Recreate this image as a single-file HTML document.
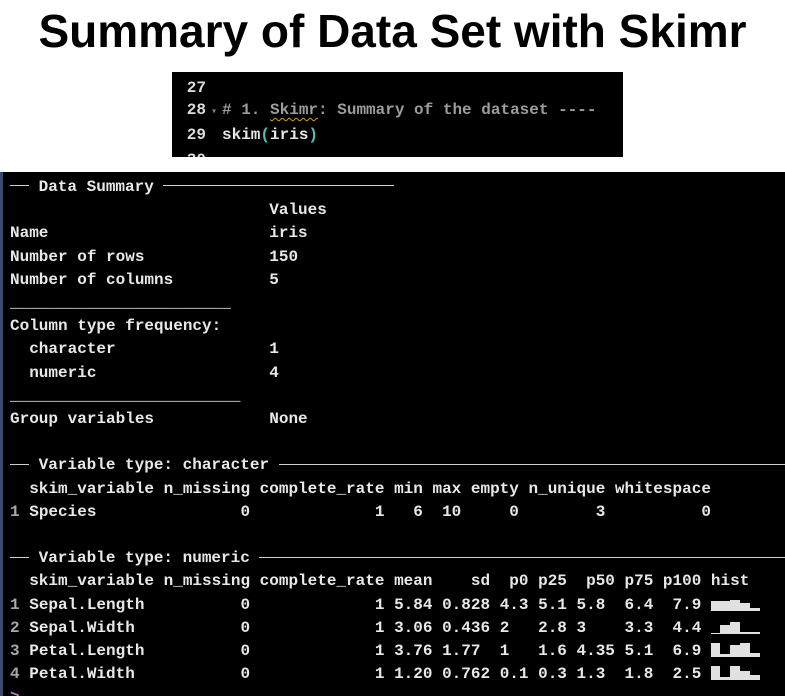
<!DOCTYPE html>
<html><head><meta charset="utf-8"><style>
html,body{margin:0;padding:0;background:#fff;width:785px;height:696px;overflow:hidden;position:relative}
.title{position:absolute;left:0;top:8px;width:785px;text-align:center;font:bold 46px/46px "Liberation Sans",Arial,sans-serif;color:#000;white-space:nowrap}
.code{position:absolute;left:172px;top:72px;width:451px;height:85px;background:#000;overflow:hidden}
.code pre{margin:0;position:absolute;left:0;top:5px;font:bold 16px/22px "Liberation Mono","DejaVu Sans Mono",monospace;color:#e6e6e6}
.ln{display:inline-block;width:34px;text-align:right;color:#dcdcdc}
.fold{display:inline-block;width:16px;color:#888;font-size:10px;text-align:center}
.cm{color:#9c9c9c}
.sk{text-decoration:underline wavy #d4a017;text-underline-offset:3px;text-decoration-thickness:1px}
.pa{color:#4fc1a8}
.term{position:absolute;left:0;top:172px;width:785px;height:524px;background:#000;overflow:hidden}
.term:before{content:"";position:absolute;left:0;top:0;width:3px;height:524px;background:#3b4a66}
.term pre{margin:0;position:absolute;left:10px;top:4px;font:bold 16px/23.2px "Liberation Mono","DejaVu Sans Mono",monospace;color:#e8e8e8}
.g{color:#a8a8a8}
.rule{display:inline-block;height:1px;background:#cfcfcf;vertical-align:middle;position:relative;top:-1px}
.h{display:inline-block;vertical-align:-2px}
.pr{color:#c77ad9}
</style></head><body>
<div class="title">Summary of Data Set with Skimr</div>
<div class="code"><pre><span class="ln">27</span>
<span class="ln">28</span><span class="fold">▾</span><span class="cm"># 1. <span class="sk">Skimr</span>: Summary of the dataset ----</span>
<span class="ln">29</span><span class="fold"> </span>skim<span class="pa">(</span>iris<span class="pa">)</span>
<span class="ln">30</span></pre></div>
<div class="term"><pre><span class="rule" style="width:19px"></span> Data Summary <span class="rule" style="width:231px"></span>
                           Values
Name                       iris
Number of rows             150
Number of columns          5
_______________________
Column type frequency:
  character                1
  numeric                  4
________________________
Group variables            None

<span class="rule" style="width:19px"></span> Variable type: character <span class="rule" style="width:520px"></span>
  skim_variable n_missing complete_rate min max empty n_unique whitespace
<span class="g">1</span> Species               0             1   6  10     0        3          0

<span class="rule" style="width:19px"></span> Variable type: numeric <span class="rule" style="width:540px"></span>
  skim_variable n_missing complete_rate mean    sd  p0 p25  p50 p75 p100 hist
<span class="g">1</span> Sepal.Length          0             1 5.84 0.828 4.3 5.1 5.8  6.4  7.9 <svg class="h" width="50" height="15" viewBox="0 0 50 15"><path fill="#e0e0e0" d="M0 5H19V4H29V7H39V12H49V15H0Z"/></svg>
<span class="g">2</span> Sepal.Width           0             1 3.06 0.436 2   2.8 3    3.3  4.4 <svg class="h" width="50" height="15" viewBox="0 0 50 15"><path fill="#e0e0e0" d="M0 14H9V6H19V3H29V13H49V15H0Z"/></svg>
<span class="g">3</span> Petal.Length          0             1 3.76 1.77  1   1.6 4.35 5.1  6.9 <svg class="h" width="50" height="15" viewBox="0 0 50 15"><path fill="#e0e0e0" d="M0 1H9V12H19V3H29V1H39V11H49V15H0Z"/></svg>
<span class="g">4</span> Petal.Width           0             1 1.20 0.762 0.1 0.3 1.3  1.8  2.5 <svg class="h" width="50" height="15" viewBox="0 0 50 15"><path fill="#e0e0e0" d="M0 1H9V12H19V1H29V6H39V10H49V15H0Z"/></svg>
<span class="pr">&gt;</span></pre></div>
</body></html>
